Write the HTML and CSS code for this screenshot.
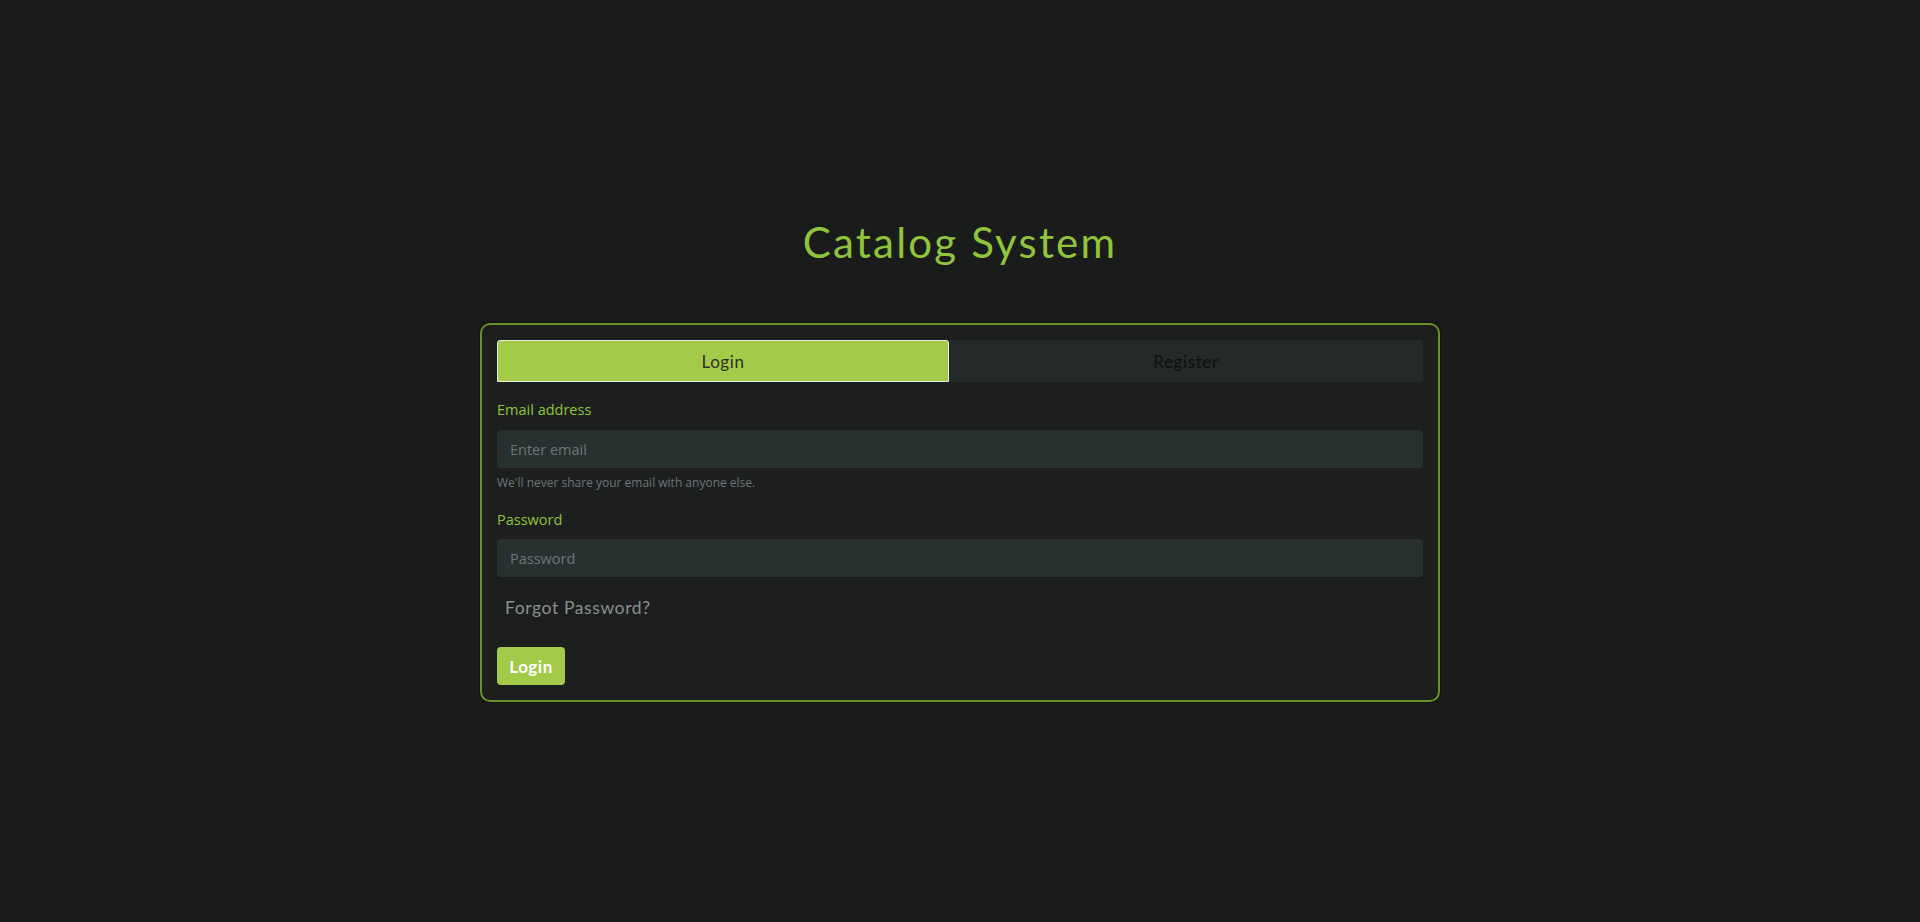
FILE: index.html
```html
<!DOCTYPE html>
<html lang="en">
<head>
<meta charset="utf-8">
<title>Catalog System</title>
<link rel="stylesheet" href="styles.css">
</head>
<body>
<main class="page">
  <h1 class="title">Catalog System</h1>
  <section class="card">
    <div class="tabs">
      <button class="tab tab-active">Login</button>
      <button class="tab">Register</button>
    </div>
    <form class="form">
      <label class="label label-email" for="email">Email address</label>
      <input class="input" id="email" type="email" placeholder="Enter email">
      <small class="help">We'll never share your email with anyone else.</small>
      <label class="label label-pass" for="pass">Password</label>
      <input class="input input-pass" id="pass" type="password" placeholder="Password">
      <a class="forgot" href="#">Forgot Password?</a>
      <button class="submit" type="button">Login</button>
    </form>
  </section>
</main>
</body>
</html>
```

FILE: styles.css
```css
* { box-sizing: border-box; }
html, body { margin: 0; padding: 0; }
body {
  background: #1a1c1b;
  min-height: 922px;
  font-family: "Open Sans", "Noto Sans", sans-serif;
}
.page {
  display: flex;
  flex-direction: column;
  align-items: center;
  padding-top: 217px;
}
.title {
  margin: 0;
  height: 50px;
  line-height: 50px;
  font-family: Lato, "Noto Sans", sans-serif;
  font-weight: 400;
  font-size: 42px;
  letter-spacing: 2.2px;
  color: #8fc43c;
}
.card {
  margin-top: 56px;
  width: 960px;
  border: 2px solid #6a9229;
  border-radius: 10px;
  background: #1c1f1e;
  padding: 15px;
  box-shadow: 0 0 1px 1px rgba(0, 0, 0, 0.35);
}
.tabs {
  display: grid;
  grid-template-columns: 452fr 474fr;
  height: 42px;
  background: #232a29;
  border-radius: 3px;
}
.tab {
  border: 1px solid transparent;
  background: transparent;
  font-family: Lato, "Noto Sans", sans-serif;
  font-size: 17px;
  letter-spacing: 0.6px;
  color: #0d100e;
  cursor: pointer;
  border-radius: 3px;
}
.tab-active {
  background: #a4ca4a;
  border-color: #e4eadc;
  color: #2a3024;
  border-radius: 3px 3px 0 0;
}
.form {
  display: flex;
  flex-direction: column;
  align-items: flex-start;
}
.label {
  height: 20px;
  line-height: 20px;
  font-size: 14.5px;
  color: #8fc43c;
}
.label-email { margin-top: 18px; }
.label-pass { margin-top: 19px; }
.input {
  width: 100%;
  height: 38px;
  margin-top: 10px;
  border: none;
  border-radius: 4px;
  background: #283030;
  padding: 0 13px;
  font-family: "Open Sans", "Noto Sans", sans-serif;
  font-size: 14.5px;
  color: #c8ccca;
  outline: none;
}
.input::placeholder { color: #6c767a; }
.input-pass { margin-top: 9px; }
.help {
  margin-top: 7px;
  height: 16px;
  line-height: 16px;
  font-size: 12px;
  color: #6c767a;
}
.forgot {
  margin-top: 19px;
  height: 24px;
  line-height: 24px;
  padding: 0 8px;
  font-family: Lato, "Noto Sans", sans-serif;
  font-size: 17.5px;
  letter-spacing: 0.6px;
  color: #8b918e;
  text-decoration: none;
}
.submit {
  margin-top: 27px;
  width: 68px;
  height: 38px;
  border: none;
  border-radius: 4px;
  background: #a4ca4a;
  color: #ffffff;
  font-family: Lato, "Noto Sans", sans-serif;
  font-weight: 700;
  font-size: 17px;
  letter-spacing: 0.5px;
  cursor: pointer;
}
```
